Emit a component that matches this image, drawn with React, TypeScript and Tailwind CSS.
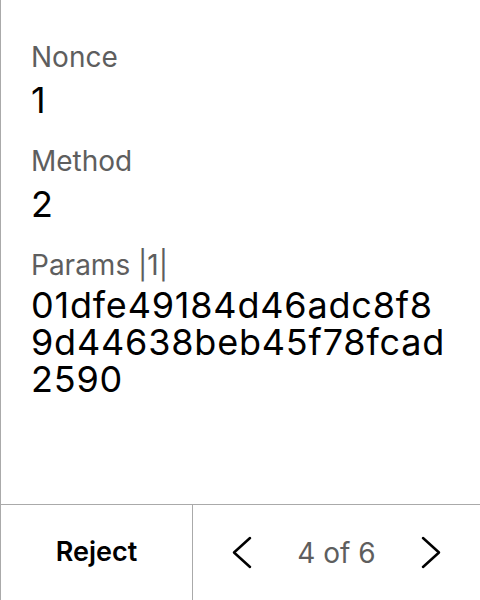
const fields = [
  { label: "Nonce", value: "1" },
  { label: "Method", value: "2" },
];

function Chevron({ dir }: { dir: "left" | "right" }) {
  const pts = dir === "left" ? "18,2 2,16.5 18,31" : "2,2 18,16.5 2,31";
  return (
    <svg width="20" height="33" viewBox="0 0 20 33" fill="none">
      <polyline points={pts} stroke="black" strokeWidth="2.5" strokeLinecap="round" strokeLinejoin="round" />
    </svg>
  );
}

export default function App() {
  return (
    <div className="w-[480px] h-[600px] bg-white border-l border-[#aaaaaa] flex flex-col font-['Inter',sans-serif]">
      <div className="flex-1 pt-[40px] pl-[30px]">
        {fields.map((f) => (
          <div key={f.label} className="mb-[24px]">
            <p className="text-[28px] leading-[34px] text-[#5e5e5e]">{f.label}</p>
            <p className="mt-[6px] text-[36px] leading-[40px] text-black">{f.value}</p>
          </div>
        ))}
        <div>
          <p className="text-[28px] leading-[34px] text-[#5e5e5e]">Params |1|</p>
          <p className="mt-[5px] text-[36px] leading-[37px] tracking-[0.8px] text-black break-all w-[418px]">
            01dfe49184d46adc8f89d44638beb45f78fcad2590
          </p>
        </div>
      </div>
      <div className="h-[96px] border-t border-[#aaaaaa] flex">
        <button className="w-[192px] border-r border-[#aaaaaa] text-[27px] font-semibold text-black">
          Reject
        </button>
        <div className="flex-1 flex items-center justify-center gap-[45px]">
          <Chevron dir="left" />
          <span className="text-[28px] text-[#5e5e5e]">4 of 6</span>
          <Chevron dir="right" />
        </div>
      </div>
    </div>
  );
}
